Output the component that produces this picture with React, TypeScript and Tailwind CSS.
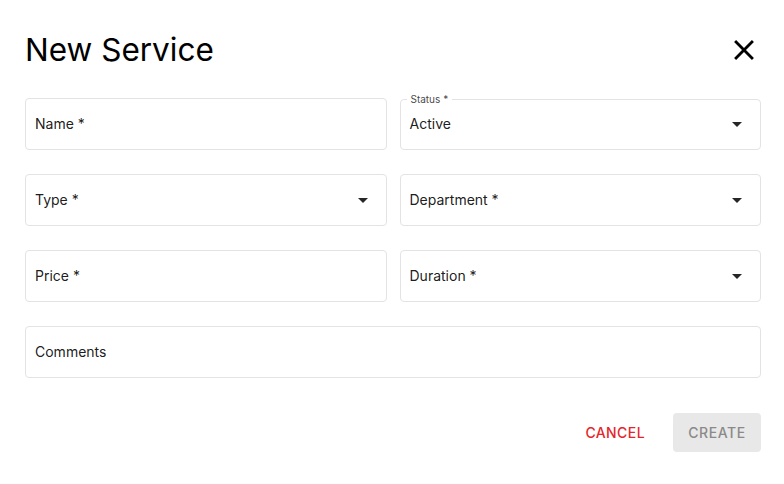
import { useState } from "react";

function Caret() {
  return (
    <svg viewBox="0 0 24 24" className="w-6 h-6 text-black/85" fill="currentColor">
      <path d="M7 10l5 5 5-5z" />
    </svg>
  );
}

interface FieldProps {
  label: string;
  value?: string;
  select?: boolean;
  className?: string;
}

function Field({ label, value, select, className = "" }: FieldProps) {
  const filled = !!value;
  return (
    <div className={`relative h-[52px] ${className}`}>
      <fieldset className="absolute inset-0 rounded border border-[#e3e3e3] px-[6px] pointer-events-none">
        {filled && (
          <legend className="px-[4px] text-[10px] leading-none text-black/75 h-[2px]">
            <span className="relative -top-[4px]">{label}</span>
          </legend>
        )}
      </fieldset>
      <div className="flex items-center h-full pl-[10px] pr-[12px] pb-[1px]">
        <span className="flex-1 text-[14px] text-black/90">{filled ? value : label}</span>
        {select && <Caret />}
      </div>
    </div>
  );
}

export default function App() {
  const [open] = useState(true);
  if (!open) return null;

  return (
    <div className="w-[784px] h-[484px] bg-white font-['Inter',sans-serif] pl-[25px] pr-[23px] pt-[29px] overflow-hidden">
      <div className="flex items-center justify-between h-[42px]">
        <h2 className="text-[31.5px] leading-none text-black">New Service</h2>
        <button className="w-[34px] h-[34px] flex items-center justify-center">
          <svg viewBox="0 0 24 24" className="w-[34px] h-[34px]" fill="black">
            <path d="M19 6.41 17.59 5 12 10.59 6.41 5 5 6.41 10.59 12 5 17.59 6.41 19 12 13.41 17.59 19 19 17.59 13.41 12z" />
          </svg>
        </button>
      </div>

      <div className="grid grid-cols-2 gap-x-[13px] gap-y-[24px] mt-[27px]">
        <Field label="Name *" />
        <Field label="Status *" value="Active" select />
        <Field label="Type *" select />
        <Field label="Department *" select />
        <Field label="Price *" />
        <Field label="Duration *" select />
        <Field label="Comments" className="col-span-2" />
      </div>

      <div className="flex justify-end items-center gap-[14px] mt-[35px]">
        <button className="px-[14px] h-[39px] text-[14px] font-medium tracking-[0.03em] text-[#e5242b]">
          CANCEL
        </button>
        <button className="w-[88px] h-[39px] rounded bg-[#e8e8e8] text-[14px] font-medium tracking-[0.04em] text-[#8a8a8a]">
          CREATE
        </button>
      </div>
    </div>
  );
}
